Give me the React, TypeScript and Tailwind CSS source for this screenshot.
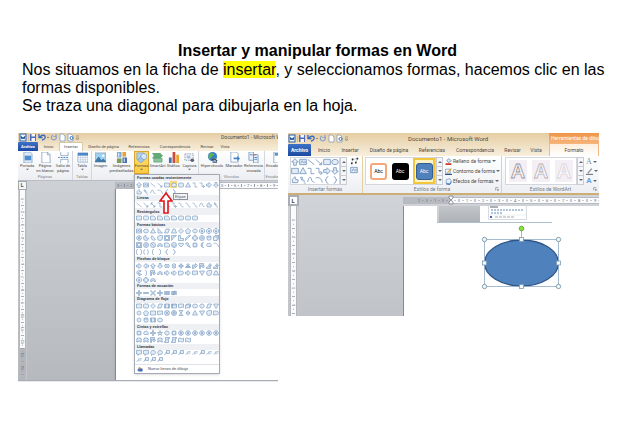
import type { ReactNode } from "react"

// Autoformas en una caja de 12x12
const SHAPES: Record<string, string> = {
  up: "M6 1L11 6H8V11H4V6H1Z",
  down: "M6 11L11 6H8V1H4V6H1Z",
  right: "M11 6L6 1V4H1V8H6V11Z",
  left: "M1 6L6 1V4H11V8H6V11Z",
  leftRight: "M1 6L4 2V4H8V2L11 6L8 10V8H4V10Z",
  upDown: "M6 1L10 4H8V8H10L6 11L2 8H4V4H2Z",
  quad: "M6 1L8 3H7V5H9V4L11 6L9 8V7H7V9H8L6 11L4 9H5V7H3V8L1 6L3 4V5H5V3H4Z",
  triArrow: "M6 1L9 4H7V8H9V6L11 9H1L3 6V8H5V4H3Z",
  bent: "M1 11V4H7V1L11 5L7 9V7H4V11Z",
  uturn: "M1 11V1H9V6H11L8 10L5 6H7V4H3V11Z",
  bentUp: "M1 8H7V5H5L8 1L11 5H9V11H1Z",
  curvedArrow: "M10 1C3 0 1 3 2 7C3 9 5 10 7 10L6 12L11 9L6 6V8C3 7 4 3 10 3Z",
  textbox: "M1 2H11V10H1ZM3 8L5 4L7 8M8 5H10M8 7H10",
  line: "M1 2L11 10",
  arrowLine: "M1 2L10 10M10 6V10H6",
  doubleLine: "M2 2L10 10M10 6V10H6M2 6V2H6",
  rect: "M1 2H11V10H1Z",
  roundRect: "M3 2H9Q11 2 11 4V8Q11 10 9 10H3Q1 10 1 8V4Q1 2 3 2Z",
  snip: "M1 2H8L11 5V10H1Z",
  ellipse: "M1 6A5 4 0 1 0 11 6A5 4 0 1 0 1 6Z",
  circle: "M2 6A4 4 0 1 0 10 6A4 4 0 1 0 2 6Z",
  tri: "M6 1L11 10H1Z",
  invTri: "M6 11L11 2H1Z",
  rightTri: "M2 1V10H11Z",
  elbow: "M1 2H6V10H11",
  elbowArrow: "M1 2H6V9H11M8 6L11 9L8 12",
  curveElbow: "M1 2C9 2 3 10 11 10",
  curve: "M1 9C3 0 6 0 7 6C8 9 10 10 11 9",
  arc: "M1 3C6 1 10 4 11 10",
  freeform: "M2 5L6 1L7 5L11 6L10 10H2Z",
  scribble: "M2 2C10 1 1 6 6 6C11 6 4 10 10 11M2 2L5 7",
  lbrace: "M8 1Q5 1 5 4Q5 6 3 6Q5 6 5 8Q5 11 8 11",
  rbrace: "M4 1Q7 1 7 4Q7 6 9 6Q7 6 7 8Q7 11 4 11",
  lbracket: "M8 1Q5 1 5 3V9Q5 11 8 11",
  rbracket: "M4 1Q7 1 7 3V9Q7 11 4 11",
  brackets: "M4 1Q1 1 1 3V9Q1 11 4 11M8 1Q11 1 11 3V9Q11 11 8 11",
  braces: "M4 1Q2 1 2 4L1 6L2 8Q2 11 4 11M8 1Q10 1 10 4L11 6L10 8Q10 11 8 11",
  para: "M4 2H11L8 10H1Z",
  trap: "M4 2H8L11 10H1Z",
  diamond: "M6 1L11 6L6 11L1 6Z",
  pentagon: "M6 1L11 5L9 11H3L1 5Z",
  hexagon: "M4 2H8L11 6L8 10H4L1 6Z",
  octagon: "M4 1H8L11 4V8L8 11H4L1 8V4ZM5 5H7V8H5Z",
  pie: "M6 6V1A5 5 0 1 0 11 6Z",
  chord: "M4 1A5 5 0 1 0 11 9Z",
  tear: "M11 1H6A5 5 0 1 0 11 6Z",
  frame: "M1 1H11V11H1ZM3 3H9V9H3Z",
  halfFrame: "M1 1H11L8 4H4V8L1 11Z",
  lShape: "M1 1H5V7H11V11H1Z",
  stripe: "M1 11V7L7 1H11Z",
  cross: "M4 1H8V4H11V8H8V11H4V8H1V4H4Z",
  can: "M2 3Q6 0 10 3V9Q6 12 2 9ZM2 3Q6 6 10 3",
  cube: "M1 4L4 1H11V8L8 11H1ZM1 4H8V11M8 4L11 1",
  bevel: "M1 1H11V11H1ZM3 3H9V8H3ZM1 10H11",
  donut: "M1 6A5 5 0 1 0 11 6A5 5 0 1 0 1 6ZM4 6A2 2 0 1 0 8 6A2 2 0 1 0 4 6Z",
  noSign: "M1 6A5 5 0 1 0 11 6A5 5 0 1 0 1 6ZM3 3L9 9",
  blockArc: "M1 9A5 6 0 0 1 11 9H8A2 3 0 0 0 4 9Z",
  smiley: "M1 6A5 5 0 1 0 11 6A5 5 0 1 0 1 6ZM4 4V5M8 4V5M3 7Q6 10 9 7",
  heart: "M6 10L1 5Q1 1 4 2L6 4L8 2Q11 1 11 5Z",
  bolt: "M4 1L8 4L7 5L11 11L4 7L5 6L1 3Z",
  sun: "M6 1L7 3L10 2L9 5L11 6L9 7L10 10L7 9L6 11L5 9L2 10L3 7L1 6L3 5L2 2L5 3Z",
  moon: "M9 1A5 5 0 1 0 9 11A6 6 0 0 1 9 1Z",
  cloud: "M3 9Q0 8 2 5Q2 2 5 3Q8 0 9 4Q12 5 10 9Z",
  plus: "M5 1H7V5H11V7H7V11H5V7H1V5H5Z",
  minus: "M1 5H11V7H1Z",
  times: "M2 1L6 5L10 1L11 2L7 6L11 10L10 11L6 7L2 11L1 10L5 6L1 2Z",
  divide: "M1 5H11V7H1ZM5 1H7V3H5ZM5 9H7V11H5Z",
  equal: "M1 3H11V5H1ZM1 7H11V9H1Z",
  notEqual: "M1 3H11V5H1ZM1 7H11V9H1ZM8 1L4 11",
  predefined: "M1 2H11V10H1ZM3 2V10M9 2V10",
  internal: "M1 2H11V10H1ZM1 4H11M3 2V10",
  document: "M1 2H11V9Q8 7 6 9Q4 11 1 9Z",
  multidoc: "M1 4H9V10Q5 8 1 11ZM3 4V2H11V8H9",
  sumX: "M1 6A5 5 0 1 0 11 6A5 5 0 1 0 1 6ZM3 3L9 9M9 3L3 9",
  sumPlus: "M1 6A5 5 0 1 0 11 6A5 5 0 1 0 1 6ZM6 1V11M1 6H11",
  hourglass: "M2 1H10L2 11H10Z",
  sort: "M6 1L10 6L6 11L2 6ZM2 6H10",
  delay: "M1 2H6Q11 2 11 6Q11 10 6 10H1Z",
  star: "M6 1L7 5H11L8 7L9 11L6 8L3 11L4 7L1 5H5Z",
  badge: "M6 1L8 2L10 3L11 6L10 9L8 10L6 11L4 10L2 9L1 6L2 3L4 2ZM5 4H7V8H5Z",
  ribbon: "M1 4H3V2H9V4H11L10 7L11 10H8V8H4V10H1L2 7Z",
  scroll: "M3 1H11V3H9V11H1V9H3ZM5 4H7M5 6H7",
  wave: "M1 3Q4 0 6 3Q8 5 11 2V9Q8 12 6 9Q4 7 1 10Z",
  callout: "M1 1H11V8H6L4 11V8H1Z",
  roundCallout: "M5 9L3 11V8A5 4 0 1 1 6 9Z",
  lineCallout: "M5 1H11V7H5ZM5 4L1 10",
  barCallout: "M6 2V9M8 3H11M8 6H11M6 5L1 9",
}

const SECTIONS: { title: string; rows: string[] }[] = [
  {
    title: "Formas usadas recientemente",
    rows: [
      "up textbox line arrowLine rect ellipse roundRect tri elbow elbowArrow right down",
      "freeform scribble curve arc lbrace rbrace",
    ],
  },
  {
    title: "Líneas",
    rows: ["line arrowLine doubleLine elbow elbowArrow elbowArrow curveElbow curveElbow curveElbow curve freeform scribble"],
  },
  { title: "Rectángulos", rows: ["rect roundRect snip snip snip snip roundRect roundRect roundRect"] },
  {
    title: "Formas básicas",
    rows: [
      "textbox ellipse tri rightTri para trap diamond pentagon hexagon octagon octagon octagon",
      "badge pie chord tear frame halfFrame lShape stripe cross donut can cube",
      "bevel donut noSign blockArc snip smiley heart bolt sun moon cloud arc",
      "brackets braces lbracket rbracket lbrace rbrace",
    ],
  },
  {
    title: "Flechas de bloque",
    rows: [
      "right left up down leftRight upDown quad triArrow bent uturn bentUp bentUp",
      "curvedArrow rbracket uturn blockArc right right delay right document invTri tear trap",
      "octagon cross blockArc",
    ],
  },
  { title: "Formas de ecuación", rows: ["plus minus times divide equal notEqual"] },
  {
    title: "Diagrama de flujo",
    rows: [
      "rect roundRect diamond para predefined internal document multidoc ellipse hexagon para invTri",
      "circle pentagon rect document sumX sumPlus hourglass sort tri invTri tear delay",
      "circle can predefined ellipse",
    ],
  },
  {
    title: "Cintas y estrellas",
    rows: [
      "sun cloud plus star hexagon sun badge badge badge badge badge badge",
      "ribbon ribbon uturn ribbon scroll scroll wave wave",
    ],
  },
  {
    title: "Llamadas",
    rows: [
      "callout callout roundCallout roundCallout lineCallout lineCallout lineCallout barCallout barCallout lineCallout barCallout barCallout",
      "barCallout lineCallout lineCallout lineCallout",
    ],
  },
]

const OPEN = "line arrowLine doubleLine elbow elbowArrow curveElbow curve arc scribble lbrace rbrace lbracket rbracket brackets braces barCallout".split(" ")

function Shape({ name, className }: { name: string; className: string }) {
  return (
    <svg viewBox="0 0 12 12" className={className}>
      <path
        d={SHAPES[name]}
        fill={OPEN.includes(name) ? "none" : "#e3edf8"}
        fillRule="evenodd"
        stroke="#7093bd"
        strokeWidth="1.2"
      />
    </svg>
  )
}

type RulerProps = { length: number; origin: number; step: number; vertical?: boolean; end?: number }

function Ruler({ length, origin, step, vertical, end }: RulerProps) {
  const first = Math.ceil((3 - origin) / step)
  const last = Math.floor((length - 3 - origin) / step)
  const marks: number[] = []
  for (let i = first; i <= last; i++) marks.push(i)
  const stop = end ?? length

  return (
    <svg
      width={vertical ? 7 : length}
      height={vertical ? length : 7}
      className="block shrink-0"
      fontSize="4"
      fill="#686d75"
      textAnchor="middle"
    >
      {vertical ? (
        <>
          <rect width="7" height={length} fill="#b4b8bd" />
          <rect x="1" width="5" height={stop} fill="#fafbfc" />
        </>
      ) : (
        <>
          <rect width={length} height="7" fill="#b7bbc1" />
          <rect x={Math.max(origin, 0)} y="1" width={length} height="5" fill="#fafbfc" />
        </>
      )}
      {marks.map((i) => {
        const p = origin + i * step
        const half = p + step / 2
        return vertical ? (
          <g key={i}>
            {i !== 0 && <text x="3.5" y={p} transform={`rotate(-90 3.5 ${p})`} dy="1.5">{Math.abs(i)}</text>}
            <path d={`M2 ${half}H5M3 ${half - step / 4}H4M3 ${half + step / 4}H4`} stroke="#9a9ea5" strokeWidth="0.8" />
          </g>
        ) : (
          <g key={i}>
            {i !== 0 && <text x={p} y="5">{Math.abs(i)}</text>}
            <path d={`M${half} 2V5M${half - step / 4} 3V4M${half + step / 4} 3V4`} stroke="#7d828a" strokeWidth="0.8" />
          </g>
        )
      })}
    </svg>
  )
}

function QuickAccess() {
  return (
    <svg width="60" height="9" viewBox="0 0 60 9" className="shrink-0" fill="none">
      <rect x="1" y="1" width="6" height="7" fill="#e9f1fb" stroke="#2c62a8" />
      <path d="M2 3L3 6L4 4L5 6L6 3" stroke="#1c4f96" />
      <path d="M9.5 2V8" stroke="#b8a888" strokeWidth="0.6" />
      <path d="M11 1H17V8H11Z" fill="#5068bd" />
      <path d="M12.5 1H16V3.500H12.5ZM12.5 5H16V8H12.5Z" fill="#f3f6ff" />
      <path d="M21 4C23 1 27 2 26 5Q25 7 23 7M20 1V4.500H23.500" stroke="#3266c0" strokeWidth="1.3" />
      <path d="M28 4H30L29 5Z" fill="#444" />
      <path d="M34 2A2.500 2.500 0 1 0 37 3M37 1V3.500H34.500" stroke="#85a1d0" strokeWidth="1.2" />
      <path d="M41 1H44L46 3V8H41Z" fill="#fff" stroke="#7892b8" strokeWidth="0.7" />
      <path d="M49 1H52L54 3V8H49Z" fill="#fff" stroke="#7892b8" strokeWidth="0.7" />
      <circle cx="52.500" cy="5" r="1.500" stroke="#3975b6" />
      <path d="M57 3H60M57 5H60L58.500 7Z" stroke="#887a60" strokeWidth="0.6" />
    </svg>
  )
}

const ICONS: Record<string, ReactNode> = {
  Portada: <><path d="M2 0H9L11 2V12H2Z" fill="#dbe9f7" stroke="#7898bd" strokeWidth="0.7" /><path d="M3 4H10V9H3Z" fill="#4c8ed0" /></>,
  Pagina: <path d="M2 0H8L11 3V12H2ZM8 0V3H11" fill="#fff" stroke="#7898bd" strokeWidth="0.8" />,
  Salto: <><path d="M3 0V4H11V0M3 12V8H11V12" fill="#fff" stroke="#7898bd" strokeWidth="0.8" /><path d="M0 6H12" stroke="#4a82bd" strokeDasharray="2 1" /></>,
  Tabla: <><path d="M1 1H12V11H1Z" fill="#fff" stroke="#7898bd" strokeWidth="0.7" /><path d="M1 1H12V4H1Z" fill="#4a86c8" /><path d="M4 4V11M6.500 4V11M9 4V11M1 6H12M1 8.500H12" stroke="#a9bdd6" strokeWidth="0.6" /></>,
  Imagen: <><path d="M0 1H12V11H0Z" fill="#9fd1f2" stroke="#8597ab" strokeWidth="0.7" /><path d="M0 10L4 5L7 9L9 7L12 10V11H0Z" fill="#3f78a5" /><circle cx="9" cy="4" r="1.300" fill="#fff" /></>,
  Predisenadas: <><path d="M1 0H6V6H1Z" fill="#78add8" /><path d="M7 0H11V5H7Z" fill="#e8a43a" /><path d="M1 7H6V12H1Z" fill="#7c9d57" /><path d="M7 6H12V12H7Z" fill="#4a6eae" /><path d="M3 1V5M9 7V11" stroke="#fff" /></>,
  Formas: <><path d="M1 1H9V8H1Z" fill="#b7d1ee" stroke="#6f9bcc" strokeWidth="0.7" /><circle cx="8.500" cy="5" r="3.300" fill="#d9e8f8" stroke="#6f9bcc" strokeWidth="0.7" /><path d="M5 5L9 9L5 12L2 9Z" fill="#a4c5e8" stroke="#6f9bcc" strokeWidth="0.7" /></>,
  SmartArt: <><path d="M0 1H9L12 4L9 7H0L2 4Z" fill="#64a97a" /><path d="M2 7H11V11H2Z" fill="#8cc49c" stroke="#4b8d60" strokeWidth="0.6" /></>,
  Grafico: <><path d="M1 6H4V12H1Z" fill="#3b76bd" /><path d="M5 0H8V12H5Z" fill="#cf4b3a" /><path d="M9 3H12V12H9Z" fill="#e9a52d" /></>,
  Captura: <><path d="M1 2H10V9H1Z" fill="#f1f4f8" stroke="#6d8098" strokeWidth="0.8" strokeDasharray="1.500 1" /><circle cx="9" cy="9" r="2" fill="#59636f" /><path d="M3 4H7V7H3Z" fill="#a9c3dd" /></>,
  Hipervinculo: <><circle cx="6" cy="5" r="5" fill="#3680c8" /><path d="M3 2Q6 0 8 3L5 5L3 8Q0 5 3 2M8 6L10 7L8 9Z" fill="#64b653" /><path d="M5 9Q8 6 11 10M6 11H11" stroke="#45515f" strokeWidth="1.500" fill="none" /></>,
  Marcador: <><path d="M2 0H8L10 2V11H2Z" fill="#fff" stroke="#7898bd" strokeWidth="0.8" /><path d="M5 6H9V4L12 7L9 10V8H5Z" fill="#4384c8" /></>,
  Referencia: <><path d="M1 0H6V9H1ZM6 3H11V12H6Z" fill="#e8f1fa" stroke="#6d8fb8" strokeWidth="0.8" /><path d="M2 3H5M7 6H10M7 8H10" stroke="#4e82bd" /><path d="M6 3H9" stroke="#cd5949" /></>,
  Encabezado: <><path d="M2 0H11V12H2Z" fill="#fff" stroke="#7898bd" strokeWidth="0.8" /><path d="M3 1H10V4H3Z" fill="#5a93cf" /></>,
}

type Tool = { icon: string; lines: string[]; className: string; menu?: boolean }

const GROUPS: { name: string; className: string; tools: Tool[] }[] = [
  {
    name: "Páginas",
    className: "w-[55px]",
    tools: [
      { icon: "Portada", lines: ["Portada"], className: "w-[18px]", menu: true },
      { icon: "Pagina", lines: ["Página", "en blanco"], className: "w-[18px]" },
      { icon: "Salto", lines: ["Salto de", "página"], className: "w-[18px]" },
    ],
  },
  {
    name: "Tablas",
    className: "w-[19px]",
    tools: [{ icon: "Tabla", lines: ["Tabla"], className: "w-[18px]", menu: true }],
  },
  {
    name: "Ilustraciones",
    className: "w-[107px]",
    tools: [
      { icon: "Imagen", lines: ["Imagen"], className: "w-[17px]" },
      { icon: "Predisenadas", lines: ["Imágenes", "prediseñadas"], className: "w-[25px]" },
      { icon: "Formas", lines: ["Formas"], className: "w-[15px] bg-linear-to-b from-[#fbe07a] to-[#fbc93c] ring ring-[#d9a72e] ring-inset", menu: true },
      { icon: "SmartArt", lines: ["SmartArt"], className: "w-[17px]" },
      { icon: "Grafico", lines: ["Gráfico"], className: "w-[15px]" },
      { icon: "Captura", lines: ["Captura"], className: "w-[17px]", menu: true },
    ],
  },
  {
    name: "Vínculos",
    className: "w-[66px]",
    tools: [
      { icon: "Hipervinculo", lines: ["Hipervínculo"], className: "w-[26px]" },
      { icon: "Marcador", lines: ["Marcador"], className: "w-[18px]" },
      { icon: "Referencia", lines: ["Referencia", "cruzada"], className: "w-[21px]" },
    ],
  },
  {
    name: "Encabezado",
    className: "w-[24px]",
    tools: [{ icon: "Encabezado", lines: ["Encabezado"], className: "w-[24px]" }],
  },
]

function ShapesMenu() {
  return (
    <div className="absolute top-[41px] left-[116px] z-10 flex h-[200px] w-[86px] flex-col border border-[#a5abb5] bg-white shadow-sm">
      {SECTIONS.map((s) => (
        <div key={s.title} className="contents">
          <h3 className="flex flex-1 items-center bg-[#eef0f3] pl-[2px] leading-none font-bold text-[#3f4854]">
            {s.title}
          </h3>
          {s.rows.map((row, r) => (
            <div key={r} className="flex h-[7px]">
              {row.split(" ").map((name, i) => (
                <button
                  key={i}
                  aria-label={name}
                  className={
                    s === SECTIONS[0] && r === 0 && name === "ellipse"
                      ? "grid size-[7px] place-items-center bg-[#fbdc7c]"
                      : "grid size-[7px] place-items-center"
                  }
                >
                  <Shape name={name} className="size-[6px]" />
                </button>
              ))}
            </div>
          ))}
        </div>
      ))}
      <button className="flex h-[9px] items-center gap-[5px] border-t border-[#dfe2e6] pl-[2px] leading-none text-[#4a525d]">
        <svg viewBox="0 0 12 12" className="size-[6px]">
          <path d="M1 5L6 1L8 6Z" fill="#e0a53d" />
          <path d="M5 5H11V11H5Z" fill="#3a62b3" />
          <circle cx="4" cy="8" r="3" fill="#5179c8" />
        </svg>
        Nuevo lienzo de dibujo
      </button>
    </div>
  )
}

function InsertWindow() {
  return (
    <section aria-label="Ficha Insertar" className="relative flex h-[249px] flex-[260] flex-col overflow-hidden text-[4px] text-[#4d4a46]">
      <div className="bg-linear-to-b from-[#e5cda3] to-[#f8efdd]">
        <div className="flex h-[9px] items-center pl-px">
          <QuickAccess />
          <span className="ml-auto w-[57px] overflow-hidden text-[5px] leading-[9px] whitespace-nowrap">
            Documento1 - Microsoft Word
          </span>
        </div>
        <nav className="flex h-[9px] items-stretch leading-none whitespace-nowrap">
          <button className="w-[20px] rounded-t-[1px] bg-linear-to-b from-[#3d71c8] to-[#1b49a0] font-bold text-white">Archivo</button>
          <button className="w-[21px]">Inicio</button>
          <button className="w-[24px] border-x border-t border-[#d9c8a8] bg-white">Insertar</button>
          <button className="w-[41px]">Diseño de página</button>
          <button className="w-[30px]">Referencias</button>
          <button className="w-[42px]">Correspondencia</button>
          <button className="w-[22px]">Revisar</button>
          <button className="w-[14px]">Vista</button>
        </nav>
      </div>

      {/* Cinta */}
      <div className="flex h-[30px] border-b border-[#b9bdc4] bg-linear-to-b from-white to-[#eceef2]">
        {GROUPS.map((g) => (
          <div key={g.name} className={`flex shrink-0 flex-col border-r border-[#d3d6dc] ${g.className}`}>
            <div className="flex h-[23px]">
              {g.tools.map((t) => (
                <button key={t.icon} className={`flex shrink-0 flex-col items-center pt-px leading-[5px] whitespace-nowrap ${t.className}`}>
                  <svg viewBox="0 0 12 12" className="size-[11px] shrink-0">{ICONS[t.icon]}</svg>
                  {t.lines.map((l) => <span key={l}>{l}</span>)}
                  {t.menu && (
                    <svg viewBox="0 0 4 4" className="size-[3px]">
                      <path d="M0 1H4L2 3Z" fill="#666a70" />
                    </svg>
                  )}
                </button>
              ))}
            </div>
            <span className="text-center leading-[6px] text-[#82868d]">{g.name}</span>
          </div>
        ))}
      </div>

      {/* Hoja */}
      <div className="flex flex-1 bg-linear-to-b from-[#cdd0d5] to-[#b6b9be]">
        <div className="flex w-[9px] flex-col items-center border-r border-[#c3c7cc]">
          <div className="grid size-[9px] shrink-0 place-items-center border border-[#a3a8af] bg-[#f4f5f7] text-[5px] leading-none font-bold">L</div>
          <Ruler length={190} origin={-4} step={13} vertical end={158} />
        </div>
        <div className="ml-[88px] flex flex-1 flex-col">
          <div className="pt-px">
            <Ruler length={163} origin={42} step={13} />
          </div>
          <div className="flex-1 border-l border-[#85898f] bg-white shadow" />
        </div>
      </div>
      <div className="h-[2px] shrink-0 border-t border-[#a9adb3] bg-[#e6e9ed]" />

      <ShapesMenu />
      <svg width="14" height="24" viewBox="0 0 14 24" className="absolute top-[58px] left-[141px] z-20">
        <path d="M7 2L13 10H9V22H5V10H1Z" fill="#fff" stroke="#e0141c" strokeWidth="1.600" />
      </svg>
      <span role="tooltip" className="absolute top-[60px] left-[155px] z-20 border border-[#8d9199] bg-[#f3f4f8] px-px leading-[5px] text-[#555]">
        Elipse
      </span>
    </section>
  )
}

function Caret({ up }: { up?: boolean }) {
  return (
    <svg viewBox="0 0 4 4" className="size-[4px] shrink-0">
      <path d={up ? "M0 3H4L2 1Z" : "M0 1H4L2 3Z"} fill="#666a70" />
    </svg>
  )
}

function ScrollColumn() {
  return (
    <div className="flex w-[7px] shrink-0 flex-col border border-[#c9cdd3] bg-[#f5f6f8]">
      <button aria-label="Subir" className="grid flex-1 place-items-center"><Caret up /></button>
      <button aria-label="Bajar" className="grid flex-1 place-items-center border-y border-[#c9cdd3]"><Caret /></button>
      <button aria-label="Más" className="grid flex-1 place-items-center"><Caret /></button>
    </div>
  )
}

const GALLERY = [
  "up textbox line arrowLine rect ellipse",
  "rect tri elbow elbowArrow right down",
  "freeform scribble curve arc lbrace rbrace",
]

function GroupLabel({ children }: { children: ReactNode }) {
  return (
    <div className="relative text-center leading-[8px] whitespace-nowrap text-[#767a82]">
      {children}
      <svg viewBox="0 0 6 6" className="absolute right-[2px] bottom-[2px] size-[4px]">
        <path d="M1 5V1H5M3 3L5 5M5 3V5H3" fill="none" stroke="#7b8088" />
      </svg>
    </div>
  )
}

function DrawingTools() {
  return (
    <div className="flex h-[39px] shrink-0 border-b-2 border-[#cfae75] bg-linear-to-b from-white to-[#eceff3]">
      <div className="flex w-[75px] shrink-0 flex-col border-r border-[#e8cfa0]">
        <div className="flex h-[29px] pt-px pl-[2px]">
          <div className="flex flex-col border border-[#d3d7dc] bg-white">
            {GALLERY.map((row) => (
              <div key={row} className="flex h-[9px]">
                {row.split(" ").map((name) => (
                  <button key={name} aria-label={name} className="grid w-[8px] place-items-center">
                    <Shape name={name} className="size-[8px]" />
                  </button>
                ))}
              </div>
            ))}
          </div>
          <ScrollColumn />
          <div className="flex flex-col gap-px pl-[3px]">
            <button aria-label="Editar forma">
              <svg viewBox="0 0 12 10" className="h-[8px] w-[10px]">
                <path d="M2 8L3 3L9 2L7 7" fill="none" stroke="#888" strokeWidth="0.8" strokeDasharray="1.500 1" />
                <path d="M1 7H3V9H1ZM2 2H4V4H2ZM8 1H10V3H8ZM6 6H8V8H6Z" fill="#333" />
              </svg>
            </button>
            <button aria-label="Cuadro de texto"><Shape name="textbox" className="size-[8px]" /></button>
          </div>
        </div>
        <div className="text-center leading-[8px] text-[#767a82]">Insertar formas</div>
      </div>

      <div className="flex w-[139px] shrink-0 flex-col border-r border-[#e8cfa0]">
        <div className="flex h-[29px] pt-px pl-[2px]">
          <div className="flex w-[71px] shrink-0 items-center justify-between border border-[#d3d7dc] bg-white pl-[4px] text-[5px] leading-none">
            <button className="size-[17px] rounded-[3px] border-2 border-[#f3a877] bg-white text-black">Abc</button>
            <button className="size-[17px] rounded-[3px] bg-black text-white">Abc</button>
            <span className="grid h-[26px] w-[22px] place-items-center border-2 border-[#f0c73d] bg-[#fdf3c4]">
              <button className="size-[17px] rounded-[3px] border border-[#355d91] bg-[#4f81bd] text-white">Abc</button>
            </span>
          </div>
          <ScrollColumn />
          <div className="flex flex-col justify-between pl-[2px] leading-[8px] whitespace-nowrap">
            <button className="flex items-center gap-px">
              <svg viewBox="0 0 12 12" className="size-[7px]">
                <path d="M3 4L7 1L11 5L6 8Z" fill="#dbe6f3" stroke="#4c6b95" />
                <path d="M1 9H11V12H1Z" fill="#d0391f" />
              </svg>
              Relleno de forma <Caret />
            </button>
            <button className="flex items-center gap-px">
              <svg viewBox="0 0 12 12" className="size-[7px]">
                <path d="M1 2H9V9H1Z" fill="#fff" stroke="#4479b8" />
                <path d="M4 8L11 1" stroke="#e3a22d" strokeWidth="2" />
                <path d="M0 10H12V12H0Z" fill="#2c558f" />
              </svg>
              Contorno de forma <Caret />
            </button>
            <button className="flex items-center gap-px">
              <svg viewBox="0 0 12 12" className="size-[7px]">
                <path d="M2 3L8 1L11 5L8 10L2 9Z" fill="#e8f0fb" stroke="#5283c0" />
                <path d="M2 9L8 10L11 5V8L8 12L2 11Z" fill="#3f72b8" />
              </svg>
              Efectos de formas <Caret />
            </button>
          </div>
        </div>
        <GroupLabel>Estilos de forma</GroupLabel>
      </div>

      <div className="flex min-w-0 flex-1 flex-col">
        <div className="flex h-[29px] pt-px pl-[3px]">
          <div className="flex flex-1 items-center justify-around border border-[#d3d7dc] bg-white font-['Liberation_Sans',sans-serif] leading-none font-bold">
            {["#98969b", "#b5b2b8", "#dbd5dc"].map((stroke) => (
              <button key={stroke} className="bg-[#f3eff5]">
                <svg width="18" height="22" fontSize="20" textAnchor="middle">
                  <text x="9" y="18" fill="#fbf9fc" stroke={stroke} strokeWidth="0.800">A</text>
                </svg>
              </button>
            ))}
          </div>
          <ScrollColumn />
          <div className="flex w-[15px] flex-col items-center justify-between text-[8px] leading-[9px] text-[#8b8f96]">
            <button className="flex items-center gap-px font-['Liberation_Serif',serif]">A<Caret /></button>
            <button className="flex items-center gap-px" aria-label="Contorno de texto">
              <svg viewBox="0 0 12 12" className="size-[7px]">
                <path d="M3 9L10 1" stroke="#8b8f96" strokeWidth="2" />
                <path d="M0 10H12V12H0Z" fill="#777b82" />
              </svg>
              <Caret />
            </button>
            <button className="flex items-center gap-px font-bold text-[#66a2dd]">A<Caret /></button>
          </div>
        </div>
        <GroupLabel>Estilos de WordArt</GroupLabel>
      </div>
    </div>
  )
}

function Handle({ x, y, square }: { x: number; y: number; square?: boolean }) {
  return square ? (
    <rect x={x - 2} y={y - 2} width="4" height="4" fill="#f3fafd" stroke="#7a9bb3" strokeWidth="0.800" />
  ) : (
    <circle cx={x} cy={y} r="2.200" fill="#eef8fb" stroke="#6f8b9c" strokeWidth="0.800" />
  )
}

// Restos de la captura anterior y la elipse seleccionada
function Drawing() {
  return (
    <svg width="195" height="110" viewBox="0 0 195 110" className="block">
      <defs>
        <linearGradient id="gris" x2="0" y2="1">
          <stop stopColor="#c2c5c9" />
          <stop offset="1" stopColor="#aeb1b5" />
        </linearGradient>
      </defs>
      <path d="M33 0H76V16H33Z" fill="url(#gris)" />
      <path d="M34 0V16" stroke="#e4e6e8" />
      <path d="M33 16.500H148" stroke="#aebfd0" />
      <path d="M84.500 0V13.500H122.500V0" fill="#fff" stroke="#cdd1d6" strokeWidth="0.800" />
      <path d="M86 1H94" stroke="#5b6069" />
      <path d="M87 4H120M87 7H99" stroke="#96b2d0" strokeWidth="1.500" strokeDasharray="2 1" />
      <path d="M85 9H122" stroke="#dfe2e6" strokeWidth="0.600" />
      <path d="M86 11H88" stroke="#4e62ae" strokeWidth="2" />
      <path d="M91 11H110" stroke="#8b9098" strokeWidth="0.800" strokeDasharray="3 1" />

      <ellipse cx="117.500" cy="57" rx="37" ry="23" fill="#4f81bd" stroke="#2f5688" strokeWidth="1.300" />
      <path d="M80.500 33.500H154.500V80.500H80.500ZM117.500 33V24" fill="none" stroke="#8ea9c4" strokeWidth="0.800" />
      <Handle x={80.5} y={33.5} />
      <Handle x={154.5} y={33.5} />
      <Handle x={80.5} y={80.5} />
      <Handle x={154.5} y={80.5} />
      <Handle x={117.5} y={33.5} square />
      <Handle x={117.5} y={80.5} square />
      <Handle x={80.5} y={57} square />
      <Handle x={154.5} y={57} square />
      <circle cx="117.500" cy="22.500" r="2.300" fill="#86e23a" stroke="#559d2b" strokeWidth="0.800" />
    </svg>
  )
}

function FormatWindow() {
  return (
    <section aria-label="Ficha Formato" className="flex h-[183px] flex-[311] flex-col overflow-hidden text-[5px] text-[#4d4a46]">
      <div className="flex bg-linear-to-b from-[#e5cda3] to-[#f8efdd]">
        <div className="min-w-0 flex-1">
          <div className="flex h-[11px] items-center">
            <QuickAccess />
            <span className="ml-[60px] text-[6px] leading-none whitespace-nowrap">Documento1 - Microsoft Word</span>
          </div>
          <nav className="flex h-[12px] items-stretch leading-none whitespace-nowrap">
            <button className="w-[23px] rounded-t-[1px] bg-linear-to-b from-[#3d71c8] to-[#1b49a0] font-bold text-white">Archivo</button>
            <button className="w-[26px]">Inicio</button>
            <button className="w-[26px]">Insertar</button>
            <button className="w-[52px]">Diseño de página</button>
            <button className="w-[34px]">Referencias</button>
            <button className="w-[52px]">Correspondencia</button>
            <button className="w-[23px]">Revisar</button>
            <button className="w-[24px]">Vista</button>
          </nav>
        </div>
        <div className="w-[50px] overflow-hidden whitespace-nowrap">
          <div className="h-[11px] bg-linear-to-b from-[#f09548] to-[#f6b57c] pl-[2px] leading-[11px] text-white">Herramientas de dibujo</div>
          <button className="block h-[12px] w-full border-x border-[#f0b988] bg-linear-to-b from-[#fdeedd] to-white leading-none">Formato</button>
        </div>
      </div>

      <DrawingTools />

      <div className="flex flex-1 bg-linear-to-b from-[#d0d3d8] to-[#c0c4c9]">
        <div className="flex w-[11px] flex-col items-center border-r border-[#c3c7cc]">
          <div className="grid size-[11px] shrink-0 place-items-center border-2 border-[#a9adb4] bg-white text-[6px] leading-none font-bold">L</div>
          <Ruler length={110} origin={-3} step={17} vertical />
        </div>
        <div className="ml-[104px] flex flex-1 flex-col">
          <div className="relative py-[2px]">
            <Ruler length={196} origin={48} step={16} />
            <svg width="6" height="10" viewBox="0 0 6 10" className="absolute top-0 left-[45px]">
              <path d="M1 1H5V3L3 5L1 3ZM3 5L5 7V9H1V7Z" fill="#f2f3f5" stroke="#7c8189" strokeWidth="0.800" />
            </svg>
          </div>
          <div className="flex-1 border-l border-[#85898f] bg-white">
            <Drawing />
          </div>
        </div>
      </div>
    </section>
  )
}

export default function App() {
  return (
    <main className="min-h-screen bg-white pt-[42px] pb-8 font-['Liberation_Sans',sans-serif] text-base leading-[18px] text-black">
      <h1 className="text-center font-bold">Insertar y manipular formas en Word</h1>
      <div className="mt-px px-[22px]">
        <p>
          Nos situamos en la ficha de <mark className="bg-[#ffff00] text-black">insertar</mark>, y seleccionamos
          formas, hacemos clic en las formas disponibles.
        </p>
        <p>Se traza una diagonal para dibujarla en la hoja.</p>
      </div>

      <div className="mt-[18px] flex items-start gap-[10px] pr-[36px] pl-[18px] font-['Roboto',sans-serif]">
        <InsertWindow />
        <FormatWindow />
      </div>
    </main>
  )
}
